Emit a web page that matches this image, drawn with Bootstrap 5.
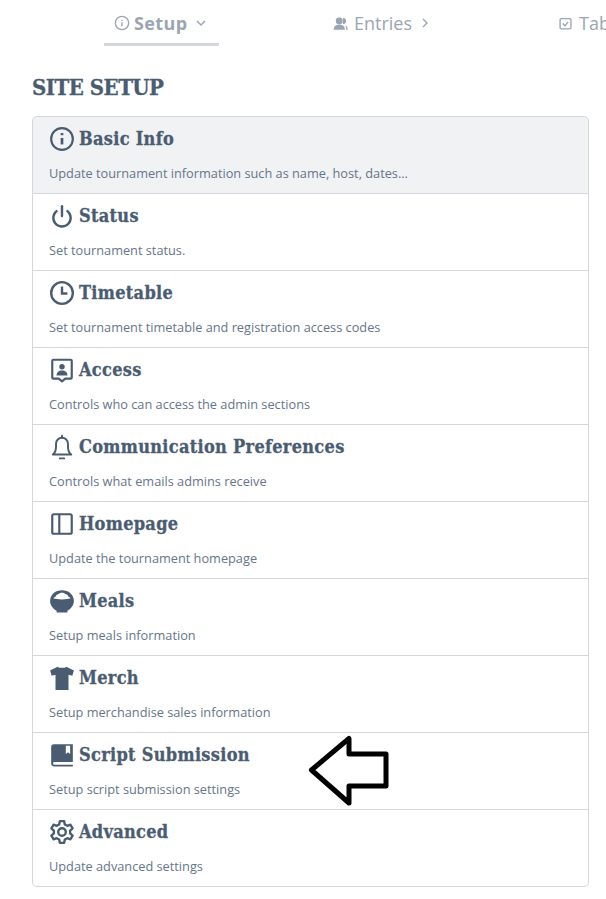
<!DOCTYPE html>
<html lang="en">
<head>
    <meta charset="UTF-8">
    <meta name="viewport" content="width=device-width, initial-scale=1.0">
    <title>Site Setup</title>
    <link rel="stylesheet" href="https://cdn.jsdelivr.net/npm/bootstrap@5.3.0/dist/css/bootstrap.min.css">
    <style>
        body {
            font-family: "Open Sans", sans-serif;
            color: #4a5c72;
            background: #fff;
            overflow: hidden;
            height: 899px;
        }
        .tab-strip {
            height: 46px;
            padding-left: 104px;
            white-space: nowrap;
            overflow: hidden;
        }
        .tab-link {
            color: #9aa5b3;
            font-size: 18px;
            line-height: 24px;
            height: 46px;
            padding: 3px 10px 0;
            border-bottom: 3px solid transparent;
            text-decoration: none;
            flex: none;
        }
        .tab-link:hover { color: #9aa5b3; }
        .tab-link.active-tab {
            font-weight: 700;
            letter-spacing: 0.4px;
            border-bottom-color: #d3d6dc;
            width: 115px;
        }
        .tab-entries { margin-left: 104px; }
        .tab-entries .tab-glyph { margin-right: 6px; }
        .tab-third { margin-left: 109px; }
        .tab-third .tab-glyph { margin-right: 7px; }
        .site-title {
            font-family: "DejaVu Serif Condensed", "DejaVu Serif", serif;
            font-weight: 700;
            font-size: 22px;
            line-height: 28px;
            letter-spacing: -0.5px;
            -webkit-text-stroke: 0.3px #4a5c72;
            color: #4a5c72;
            margin: 27px 0 15px 32px;
        }
        .setup-list {
            width: 557px;
            margin-left: 32px;
            border-radius: 5px;
            --bs-list-group-border-color: #d3d6dc;
        }
        .setup-row {
            height: 77px;
            padding: 9px 16px 0;
            color: #4a5c72;
        }
        .setup-row:first-child { height: 78px; }
        .setup-row.current { background: #f1f2f4; color: #4a5c72; }
        .setup-row:hover { color: #4a5c72; }
        .row-title {
            font-family: "DejaVu Serif Condensed", "DejaVu Serif", serif;
            font-weight: 700;
            font-size: 18px;
            line-height: 26px;
            height: 26px;
            letter-spacing: 0.3px;
            -webkit-text-stroke: 0.3px #4a5c72;
        }
        .row-desc {
            font-size: 12.75px;
            line-height: 18px;
            margin-top: 12px;
            color: #66758a;
        }
        .row-icon { width: 26px; height: 26px; flex: none; }
        .note-arrow {
            position: absolute;
            left: 308px;
            top: 735px;
        }
    </style>
</head>
<body class="position-relative">
    <nav class="tab-strip d-flex">
        <a class="tab-link active-tab d-flex align-items-center" href="#">
            <svg width="16" height="16" viewBox="0 0 24 24" fill="none" stroke="currentColor" stroke-width="2" class="me-1"><circle cx="12" cy="12" r="10"/><path d="M12 11v6M12 7v1.500"/></svg>
            <span>Setup</span>
            <svg width="10" height="10" viewBox="0 0 10 10" fill="none" stroke="currentColor" stroke-width="1.400" class="ms-2"><path d="M1 3l4 4 4-4"/></svg>
        </a>
        <a class="tab-link tab-entries d-flex align-items-center" href="#">
            <svg width="15" height="15" viewBox="0 0 24 24" fill="currentColor" class="tab-glyph"><circle cx="10" cy="8" r="5.500"/><path d="M1 22c0-6 4-8 9-8s9 2 9 8z"/><path d="M16 3a5 5 0 0 1 0 10zM20 15c2 1 3.500 3 3.500 7H21c0-3-.5-5-1-7z"/></svg>
            <span>Entries</span>
            <svg width="10" height="10" viewBox="0 0 10 10" fill="none" stroke="currentColor" stroke-width="1.400" class="ms-2"><path d="M3 1l4 4-4 4"/></svg>
        </a>
        <a class="tab-link tab-third d-flex align-items-center" href="#">
            <svg width="13" height="13" viewBox="0 0 24 24" fill="none" stroke="currentColor" stroke-width="2.500" class="tab-glyph"><rect x="2" y="3" width="20" height="19" rx="2"/><path d="M7 12l4 4 6-7"/></svg>
            <span>Tabulation</span>
        </a>
    </nav>

    <h1 class="site-title">SITE SETUP</h1>

    <div class="list-group setup-list">
        <a href="#" class="list-group-item list-group-item-action setup-row current">
            <div class="row-title d-flex align-items-center gap-1">
                <svg class="row-icon" viewBox="0 0 24 24" fill="none" stroke="currentColor" stroke-width="2"><circle cx="12" cy="12" r="10"/><path d="M12 11v6" stroke-width="2.500"/><path d="M12 6.500v2" stroke-width="2.500"/></svg>
                <span>Basic Info</span>
            </div>
            <div class="row-desc">Update tournament information such as name, host, dates...</div>
        </a>
        <a href="#" class="list-group-item list-group-item-action setup-row">
            <div class="row-title d-flex align-items-center gap-1">
                <svg class="row-icon" viewBox="0 0 24 24" fill="none" stroke="currentColor" stroke-width="2.200" stroke-linecap="round"><path d="M12 3v9"/><path d="M7 7.500a8 8 0 1 0 10 0"/></svg>
                <span>Status</span>
            </div>
            <div class="row-desc">Set tournament status.</div>
        </a>
        <a href="#" class="list-group-item list-group-item-action setup-row">
            <div class="row-title d-flex align-items-center gap-1">
                <svg class="row-icon" viewBox="0 0 24 24" fill="none" stroke="currentColor" stroke-width="2.200"><circle cx="12" cy="12" r="10"/><path d="M12 6v6.500h5"/></svg>
                <span>Timetable</span>
            </div>
            <div class="row-desc">Set tournament timetable and registration access codes</div>
        </a>
        <a href="#" class="list-group-item list-group-item-action setup-row">
            <div class="row-title d-flex align-items-center gap-1">
                <svg class="row-icon" viewBox="0 0 24 24" fill="none" stroke="currentColor" stroke-width="2" stroke-linejoin="round"><path d="M4 2.500h16a1 1 0 0 1 1 1V19a1 1 0 0 1-1 1h-5l-3 2.500L9 20H4a1 1 0 0 1-1-1V3.500a1 1 0 0 1 1-1z"/><circle cx="12" cy="9" r="2.500" fill="currentColor" stroke="none"/><path d="M7 17c0-3 2-4.500 5-4.500s5 1.500 5 4.500z" fill="currentColor" stroke="none"/></svg>
                <span>Access</span>
            </div>
            <div class="row-desc">Controls who can access the admin sections</div>
        </a>
        <a href="#" class="list-group-item list-group-item-action setup-row">
            <div class="row-title d-flex align-items-center gap-1">
                <svg class="row-icon" viewBox="0 0 24 24" fill="none" stroke="currentColor" stroke-width="1.800" stroke-linejoin="round"><path d="M3.500 19c2-1.500 3-3 3-7.500V9a5.500 5.500 0 0 1 11 0v2.500c0 4.500 1 6 3 7.500z"/><path d="M12 1.500v2M10 22.500h4" stroke-linecap="round"/></svg>
                <span>Communication Preferences</span>
            </div>
            <div class="row-desc">Controls what emails admins receive</div>
        </a>
        <a href="#" class="list-group-item list-group-item-action setup-row">
            <div class="row-title d-flex align-items-center gap-1">
                <svg class="row-icon" viewBox="0 0 24 24" fill="none" stroke="currentColor" stroke-width="2"><rect x="3" y="3" width="18" height="18" rx="1.500"/><path d="M9.500 3v18"/></svg>
                <span>Homepage</span>
            </div>
            <div class="row-desc">Update the tournament homepage</div>
        </a>
        <a href="#" class="list-group-item list-group-item-action setup-row">
            <div class="row-title d-flex align-items-center gap-1">
                <svg class="row-icon" viewBox="0 0 24 24" fill="currentColor"><path d="M1 11.500C1.500 5.500 6 2 12 2s10.500 3.500 11 9.500c.1 4.500-3 8-6 9.500v1.500H7V21c-3-1.500-6.100-5-6-9.500z"/><path d="M4 9.500c.5-1 1.500-1 2-1.500.5-2 2-2 3-2.500C10 4 14 4 15 5.500c1 .5 2.500.5 3 2.500.5.5 1.500.5 2 1.500-2.500.8-4 1-8 1s-5.500-.2-8-1z" fill="#fff"/></svg>
                <span>Meals</span>
            </div>
            <div class="row-desc">Setup meals information</div>
        </a>
        <a href="#" class="list-group-item list-group-item-action setup-row">
            <div class="row-title d-flex align-items-center gap-1">
                <svg class="row-icon" viewBox="0 0 24 24" fill="currentColor"><path d="M8 1.500c1 1.500 7 1.500 8 0l7 3.500-1.500 5-3.500-1v14H6V9l-3.500 1L1 5z"/></svg>
                <span>Merch</span>
            </div>
            <div class="row-desc">Setup merchandise sales information</div>
        </a>
        <a href="#" class="list-group-item list-group-item-action setup-row">
            <div class="row-title d-flex align-items-center gap-1">
                <svg class="row-icon" viewBox="0 0 24 24" fill="currentColor"><path fill-rule="evenodd" d="M4.500 2H22v16.500H5a1.250 1.250 0 0 0 0 2.500h17v1.500H5A3 3 0 0 1 2 20V4.500A2.500 2.500 0 0 1 4.500 2zm11 1.500V11l2-1.500 2 1.500V3.500z"/></svg>
                <span>Script Submission</span>
            </div>
            <div class="row-desc">Setup script submission settings</div>
        </a>
        <a href="#" class="list-group-item list-group-item-action setup-row">
            <div class="row-title d-flex align-items-center gap-1">
                <svg class="row-icon" viewBox="0 0 24 24" fill="none" stroke="currentColor" stroke-width="2.200" stroke-linejoin="round"><circle cx="12" cy="12" r="3.500"/><path d="M10 2h4l.6 3 2.300 1.300 2.900-1 2 3.400-2.300 2v2.600l2.300 2-2 3.400-2.900-1-2.300 1.300-.6 3h-4l-.6-3-2.300-1.300-2.900 1-2-3.400 2.300-2v-2.600l-2.300-2 2-3.400 2.900 1L9.400 5z"/></svg>
                <span>Advanced</span>
            </div>
            <div class="row-desc">Update advanced settings</div>
        </a>
    </div>

    <svg class="note-arrow" width="84" height="72" viewBox="0 0 84 72" fill="#fff" stroke="#000" stroke-width="5" stroke-linejoin="round"><path d="M3.500 35L41 3.500V19h37v32H41v17z"/></svg>

    <script src="https://cdn.jsdelivr.net/npm/bootstrap@5.3.0/dist/js/bootstrap.bundle.min.js"></script>
</body>
</html>
